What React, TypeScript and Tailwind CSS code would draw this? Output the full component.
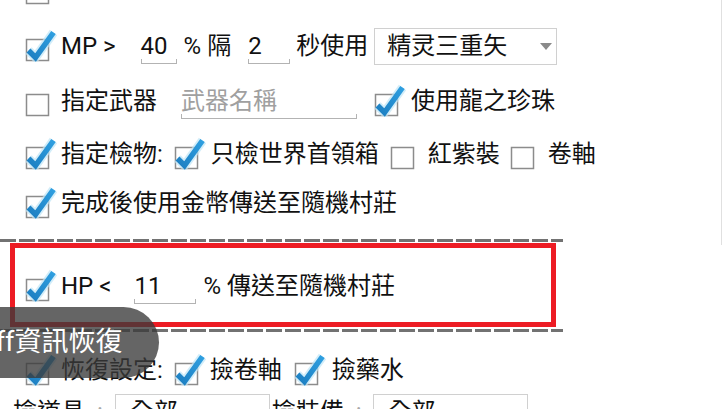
import React from 'react';

/** Checkbox drawn like the old Android holo style: grey box, glowing blue tick. */
function Check({ on = false }: { on?: boolean }): React.JSX.Element {
  return (
    <svg width="32" height="32" viewBox="0 0 32 32" className="shrink-0 overflow-visible">
      <defs>
        <linearGradient id="tick" x1="0" y1="1" x2="1" y2="0">
          <stop offset="0" stopColor="#1d7fc2" />
          <stop offset="1" stopColor="#2f9fe0" />
        </linearGradient>
      </defs>
      <rect x="1.5" y="9.5" width="22" height="21" fill="#fff" stroke="#8c8c8c" strokeWidth="1.5" />
      {on && (
        <>
          <path d="M3.5 20.5 L10.5 27.5 L28.5 2.5" fill="none" stroke="#bfe5f7" strokeWidth="9" strokeLinejoin="round" opacity="0.7" />
          <path d="M3.5 20.5 L10.5 27.5 L28.5 2.5" fill="none" stroke="url(#tick)" strokeWidth="5.5" strokeLinejoin="miter" />
        </>
      )}
    </svg>
  );
}

/** Underlined text field with the little end ticks. */
function Field({
  value,
  className,
  placeholder = false,
}: {
  value: string;
  className: string;
  placeholder?: boolean;
}): React.JSX.Element {
  return (
    <div className={`flex shrink-0 flex-col ${className}`}>
      <span className={`leading-[24px] ${placeholder ? 'text-[#a0a0a0]' : ''}`}>{value}</span>
      <div className="-mb-[6px] mt-[1px] h-[5px] border-x border-b border-[#b3b3b3]" />
    </div>
  );
}

function Select({ value, className }: { value: string; className: string }): React.JSX.Element {
  return (
    <div className={`flex h-[37px] shrink-0 items-center border border-[#d0d0d0] bg-white ${className}`}>
      <span className="leading-none">{value}</span>
      <svg width="12" height="7" viewBox="0 0 12 7" className="ml-auto mr-[4px]">
        <path d="M0 0 H12 L6 7 Z" fill="#8a8a8a" />
      </svg>
    </div>
  );
}

function Row({ className, children }: { className: string; children: React.ReactNode }): React.JSX.Element {
  return <div className={`flex shrink-0 items-center whitespace-nowrap pl-[25px] ${className}`}>{children}</div>;
}

function Dashed(): React.JSX.Element {
  return (
    <div className="h-[3px] w-[563px] shrink-0 bg-[repeating-linear-gradient(to_right,#727272_0_16px,transparent_16px_19px)]" />
  );
}

export default function App(): React.JSX.Element {
  return (
    <div className="relative h-[409px] w-[722px] overflow-hidden bg-white font-['Roboto','Noto_Sans_CJK_TC',sans-serif] text-[24px] text-[#111]">
      <div className="absolute right-0 top-0 h-[245px] w-px bg-[#e0e0e0]" />

      <div className="-mt-[41px] flex flex-col">
        <Row className="h-[60px]">
          <Check />
          <span className="ml-[4px] w-[132px]">HP &lt;</span>
          <Field value="" className="w-[71px]" />
          <span className="ml-[19px]">秒後使用</span>
        </Row>

        <Row className="h-[54px]">
          <Check on />
          <span className="ml-[4px]">MP &gt;</span>
          <Field value="40" className="ml-[13px] w-[48px] pl-[12px]" />
          <span className="ml-[7px]">% 隔</span>
          <Field value="2" className="ml-[11px] w-[48px] pl-[6px]" />
          <span className="ml-[6px]">秒使用</span>
          <Select value="精灵三重矢" className="ml-[6px] w-[183px] pl-[12px]" />
        </Row>

        <Row className="h-[56px]">
          <Check />
          <span className="ml-[4px]">指定武器</span>
          <Field value="武器名稱" placeholder className="ml-[13px] w-[187px] pl-[11px]" />
          <span className="ml-[17px]">
            <Check on />
          </span>
          <span className="ml-[5px]">使用龍之珍珠</span>
        </Row>

        <Row className="h-[50px]">
          <Check on />
          <span className="ml-[4px]">指定檢物:</span>
          <span className="ml-[11px]">
            <Check on />
          </span>
          <span className="ml-[5px]">只檢世界首領箱</span>
          <span className="ml-[11px]">
            <Check />
          </span>
          <span className="ml-[6px]">紅紫裝</span>
          <span className="ml-[10px]">
            <Check />
          </span>
          <span className="ml-[6px]">卷軸</span>
        </Row>

        <Row className="h-[48px]">
          <Check on />
          <span className="ml-[4px]">完成後使用金幣傳送至隨機村莊</span>
        </Row>

        <div className="mt-[12px]">
          <Dashed />
        </div>

        <Row className="h-[87px]">
          <Check on />
          <span className="ml-[4px]">HP &lt;</span>
          <Field value="11" className="ml-[13px] w-[72px] pl-[10px]" />
          <span className="ml-[7px]">% 傳送至隨機村莊</span>
        </Row>

        <Dashed />

        <Row className="mt-[18px] h-[40px]">
          <Check on />
          <span className="ml-[4px]">恢復設定:</span>
          <span className="ml-[11px]">
            <Check on />
          </span>
          <span className="ml-[4px]">撿卷軸</span>
          <span className="ml-[12px]">
            <Check on />
          </span>
          <span className="ml-[6px]">撿藥水</span>
        </Row>

        <div className="flex h-[44px] shrink-0 items-center whitespace-nowrap pl-[13px]">
          <span>撿道具</span>
          <span className="ml-[12px] text-[#a8a8a8]">:</span>
          <Select value="全部" className="ml-[12px] w-[155px] pl-[14px]" />
          <span className="ml-[2px]">撿裝備</span>
          <span className="ml-[12px] text-[#a8a8a8]">:</span>
          <Select value="全部" className="ml-[11px] w-[155px] pl-[14px]" />
        </div>
      </div>

      {/* annotation frame */}
      <div className="absolute left-[10px] top-[243px] h-[84px] w-[546px] border-[5px] border-[#ed1c24]" />

      {/* toast */}
      <div className="absolute left-[-60px] top-[307px] flex h-[71px] items-center rounded-full bg-[rgba(58,58,58,0.78)] pl-[24px] pr-[37px] text-[27px] whitespace-nowrap text-white">
        Buff資訊恢復
      </div>
    </div>
  );
}
